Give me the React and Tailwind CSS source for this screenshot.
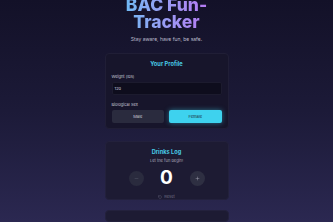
import React from "react";
import { Minus, Plus, RotateCcw } from "lucide-react";

export default function App() {
  const font = { fontFamily: "Inter, 'Noto Sans', sans-serif" };
  return (
    <div
      className="h-screen w-full overflow-hidden bg-gradient-to-b from-[#131128] via-[#1c1a38] to-[#2b2851] flex flex-col items-center"
      style={font}
    >
      <h1 className="mt-[-4px] text-[17.5px] leading-[17px] font-extrabold text-center bg-gradient-to-r from-[#6fb8f4] to-[#b57af3] bg-clip-text text-transparent">
        BAC Fun-
        <br />
        Tracker
      </h1>
      <p className="mt-[6px] text-[5px] leading-[6px] text-[#bdbccc]">
        Stay aware, have fun, be safe.
      </p>

      <section className="mt-[11px] w-[124px] rounded-[4px] bg-[#17152b] border border-[#201e36] px-[6px] pt-[7px] pb-[5px] flex flex-col">
        <h2 className="text-center text-[5.7px] leading-[6px] font-bold text-[#48c8e4]">
          Your Profile
        </h2>
        <label className="mt-[7px] text-[4px] leading-[5px] text-[#c9c8d6]">
          Weight (lbs)
        </label>
        <div className="mt-[3px] h-[13px] rounded-[2px] bg-[#0e0d1d] border border-[#1c1b2e] flex items-center px-[2px] text-[4px] text-[#d6d5e0]">
          120
        </div>
        <label className="mt-[7px] text-[4px] leading-[5px] text-[#c9c8d6]">
          Biological Sex
        </label>
        <div className="mt-[3px] grid grid-cols-2 gap-[5px]">
          <button className="h-[13px] rounded-[2px] bg-[#2a2b3e] text-[4px] text-[#c9c8d6]">
            Male
          </button>
          <button className="h-[13px] rounded-[2px] bg-[#3ed2ee] text-[4px] text-[#1b2a3a] shadow-[0_0_5px_rgba(62,210,238,0.5)]">
            Female
          </button>
        </div>
      </section>

      <section className="mt-[12px] w-[124px] h-[67px] rounded-[4px] bg-[#1d1b33] border border-[#23213c] pt-[7px] flex flex-col items-center">
        <h2 className="text-[5.7px] leading-[6px] font-bold text-[#48c8e4]">
          Drinks Log
        </h2>
        <p className="mt-[3px] text-[4px] leading-[5px] text-[#a9a8ba]">
          Let the fun begin!
        </p>
        <div className="mt-[6px] flex items-center gap-[14px]">
          <div className="w-[15px] h-[15px] rounded-full bg-[#2a2b3e] flex items-center justify-center text-[#5d5e70]">
            <Minus size={5} strokeWidth={2} />
          </div>
          <span className="text-[19px] leading-[18px] font-bold text-white w-[18px] text-center">
            0
          </span>
          <div className="w-[15px] h-[15px] rounded-full bg-[#2e2f42] flex items-center justify-center text-[#a9aaba]">
            <Plus size={5} strokeWidth={2} />
          </div>
        </div>
        <div className="mt-[7px] flex items-center gap-[2px] text-[#6e6d82]">
          <RotateCcw size={4} strokeWidth={2} />
          <span className="text-[4px] leading-[5px]">Reset</span>
        </div>
      </section>

      <section className="mt-[10px] w-[124px] h-[60px] rounded-[4px] bg-[#1d1b33] border border-[#23213c]" />
    </div>
  );
}
